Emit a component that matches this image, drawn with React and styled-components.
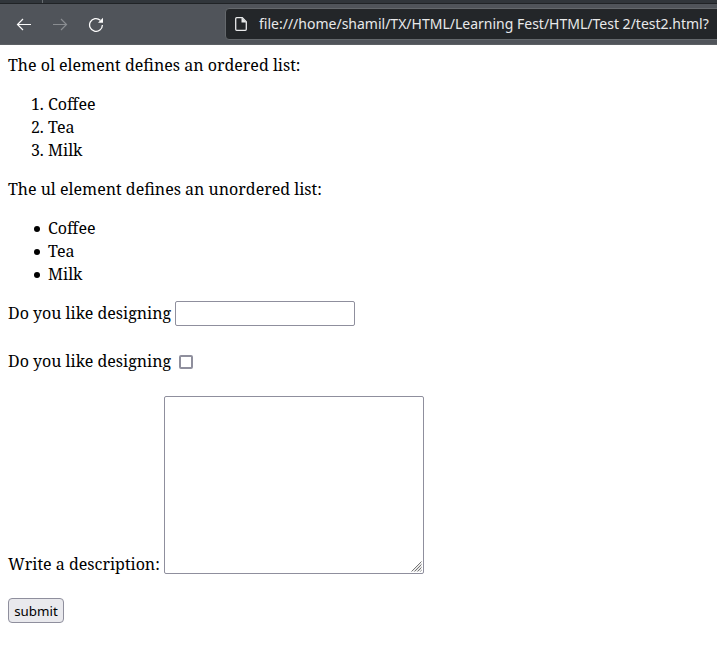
import React from 'react';
import styled, { createGlobalStyle } from 'styled-components';

const GlobalStyle = createGlobalStyle`
  * { box-sizing: border-box; }
  body { margin: 0; background: #fff; overflow: hidden; }
`;

const Window = styled.div`
  height: 662px;
  overflow: hidden;
  color: #000;
  font: 16px/23px 'Noto Serif', 'Droid Serif', 'DejaVu Serif Condensed', 'DejaVu Serif', serif;
`;

const TabStrip = styled.div`
  height: 4px;
  background: #31363b;
  border-bottom: 1px solid #202326;
  padding-left: 42px;
`;

const TabDivider = styled.div`
  width: 1px;
  height: 3px;
  background: #686d71;
`;

const Toolbar = styled.header`
  height: 41px;
  display: flex;
  align-items: flex-start;
  background: #50545a;
  border-bottom: 1px solid #5c6064;
  padding: 4px 0 0 12px;
`;

const NavButton = styled.button`
  flex: none;
  width: 24px;
  height: 32px;
  margin-right: 12px;
  padding: 0;
  border: 0;
  background: none;
  color: ${(p) => (p.disabled ? '#8a8d91' : '#fcfcfc')};
  display: flex;
  align-items: center;
  justify-content: center;
`;

const AddressBar = styled.div`
  flex: none;
  width: 600px;
  height: 32px;
  margin-left: 105px;
  display: flex;
  align-items: center;
  padding: 0 0 0 7px;
  background: #232629;
  border: 1px solid #64686c;
  border-radius: 4px;
  color: #e8e9ea;
`;

const Url = styled.span`
  margin-left: 10px;
  font: 14px/24px 'Noto Sans', sans-serif;
  white-space: nowrap;
`;

const Page = styled.main`
  padding: 9px 8px 8px;
`;

const Paragraph = styled.p`
  margin: 0 0 16px;
`;

const OrderedList = styled.ol`
  margin: 0 0 16px;
  padding-left: 40px;
`;

const BulletList = styled.ul`
  margin: 0 0 15px;
  padding-left: 26px;
  list-style: none;
`;

const BulletItem = styled.li`
  display: flex;
  align-items: center;

  &::before {
    content: '';
    width: 6px;
    height: 6px;
    margin: 1px 8px 0 0;
    border-radius: 50%;
    background: #000;
  }
`;

const Label = styled.span`
  white-space: nowrap;
`;

const Field = styled.label`
  display: flex;
  align-items: ${(p) => p.$align || 'center'};
  height: ${(p) => p.$height}px;
  margin-bottom: ${(p) => p.$gap}px;
`;

const AreaLabel = styled(Label)`
  margin-bottom: -2px;
`;

const TextInput = styled.input`
  width: 180px;
  height: 25px;
  margin: 0 0 0 4px;
  border: 1px solid #8f8f9d;
  border-radius: 2px;
  background: #fff;
`;

const Checkbox = styled.input`
  appearance: none;
  width: 14px;
  height: 14px;
  margin: 0 0 0 8px;
  border: 2px solid #8f8f9d;
  border-radius: 2px;
  background: #fff;
`;

const AreaFrame = styled.span`
  position: relative;
  width: 260px;
  height: 178px;
  margin-left: 4px;
`;

const TextArea = styled.textarea`
  display: block;
  width: 100%;
  height: 100%;
  margin: 0;
  border: 1px solid #8f8f9d;
  border-radius: 2px;
  resize: none;
  background: #fff;
`;

const Grip = styled.svg`
  position: absolute;
  right: 2px;
  bottom: 2px;
`;

const Submit = styled.button`
  display: block;
  width: 56px;
  height: 25px;
  padding: 1px 0 0;
  border: 1px solid #8f8f9d;
  border-radius: 4px;
  background: #e9e9ed;
  color: #000;
  font: 13.333px/22px 'Noto Sans', sans-serif;
`;

const drinks = ['Coffee', 'Tea', 'Milk'];

const Arrow = ({ flip }) => (
  <svg width="16" height="16" viewBox="0 0 16 16" fill="none" stroke="currentColor" strokeWidth="1.2">
    <path d={flip ? 'M1 8.5H14.5M9 3L14.5 8.5L9 14' : 'M15 8.5H1.5M7 3L1.5 8.5L7 14'} />
  </svg>
);

export default function App() {
  return (
    <Window>
      <GlobalStyle />
      <TabStrip><TabDivider /></TabStrip>
      <Toolbar>
        <NavButton aria-label="Back"><Arrow /></NavButton>
        <NavButton aria-label="Forward" disabled><Arrow flip /></NavButton>
        <NavButton aria-label="Reload">
          <svg width="16" height="16" viewBox="0 0 16 16" fill="none" stroke="currentColor" strokeWidth="1.3">
            <path d="M12.3 4.2A6.4 6.4 0 1 0 14.4 9" />
            <path d="M10 6.8H15V1.8Z" fill="currentColor" stroke="none" />
          </svg>
        </NavButton>
        <AddressBar>
          <svg width="16" height="16" viewBox="0 0 16 16" fill="none" stroke="currentColor" strokeWidth="1.3">
            <path d="M3.7 1.7H9.3L13.3 5.7V13.3Q13.3 14.3 12.3 14.3H3.7Q2.7 14.3 2.7 13.3V2.7Q2.7 1.7 3.7 1.7Z" />
            <path d="M8.5 1.7V6.5H13.5Z" fill="currentColor" stroke="none" />
          </svg>
          <Url>file:///home/shamil/TX/HTML/Learning Fest/HTML/Test 2/test2.html?</Url>
        </AddressBar>
      </Toolbar>
      <Page>
        <Paragraph>The ol element defines an ordered list:</Paragraph>
        <OrderedList>{drinks.map((d) => <li key={d}>{d}</li>)}</OrderedList>
        <Paragraph>The ul element defines an unordered list:</Paragraph>
        <BulletList>{drinks.map((d) => <BulletItem key={d}>{d}</BulletItem>)}</BulletList>
        <Field $height={25} $gap={23}><Label>Do you like designing</Label><TextInput type="text" /></Field>
        <Field $height={25} $gap={22}><Label>Do you like designing</Label><Checkbox type="checkbox" /></Field>
        <Field $height={178} $gap={24} $align="flex-end">
          <AreaLabel>Write a description:</AreaLabel>
          <AreaFrame>
            <TextArea />
            <Grip width="11" height="11" viewBox="0 0 11 11" stroke="#777" strokeWidth="1">
              <path d="M.5 10.5L10.5 .5M3.5 10.5L10.5 3.5M6.5 10.5L10.5 6.5M9.5 10.5L10.5 9.5" />
              <path d="M2 10.5L10.5 2M5 10.5L10.5 5M8 10.5L10.5 8" stroke="#d0d0d0" />
            </Grip>
          </AreaFrame>
        </Field>
        <Submit type="button">submit</Submit>
      </Page>
    </Window>
  );
}
